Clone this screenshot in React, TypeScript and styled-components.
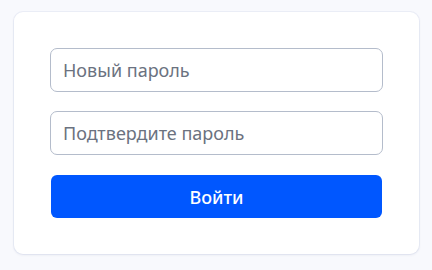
import React from "react";
import styled, { createGlobalStyle } from "styled-components";

const Global = createGlobalStyle`
  html, body { margin: 0; padding: 0; background: #f8f9fd; }
  body { font-family: "Noto Sans", "Open Sans", sans-serif; }
  * { box-sizing: border-box; }
`;

const Page = styled.div`
  width: 432px;
  height: 270px;
  padding: 12px 13px 0 14px;
`;

const Card = styled.form`
  width: 405px;
  height: 242px;
  background: #ffffff;
  border-radius: 9px;
  box-shadow: 0 1px 3px rgba(30, 40, 90, 0.08), 0 0 0 1px rgba(228, 232, 245, 0.6);
  padding: 36px;
  display: flex;
  flex-direction: column;
`;

const Input = styled.input<{ $mb: number }>`
  width: 333px;
  height: 44px;
  border: 1px solid #b4bccb;
  border-radius: 7px;
  padding: 0 12px;
  font-family: "Noto Sans", "Open Sans", sans-serif;
  font-size: 18px;
  color: #1f2937;
  background: #fff;
  margin-bottom: ${(p) => p.$mb}px;
  outline: none;
  &::placeholder { color: #6b7280; }
`;

const Button = styled.button`
  width: 331px;
  height: 43px;
  margin-left: 1px;
  border: none;
  border-radius: 6px;
  background: #0057ff;
  color: #fff;
  font-family: "Noto Sans", "Open Sans", sans-serif;
  font-size: 18px;
  font-weight: 500;
  cursor: pointer;
`;

export default function App() {
  return (
    <>
      <Global />
      <Page>
        <Card onSubmit={(e) => e.preventDefault()}>
          <Input $mb={19} type="password" placeholder="Новый пароль" />
          <Input $mb={20} type="password" placeholder="Подтвердите пароль" />
          <Button type="submit">Войти</Button>
        </Card>
      </Page>
    </>
  );
}
